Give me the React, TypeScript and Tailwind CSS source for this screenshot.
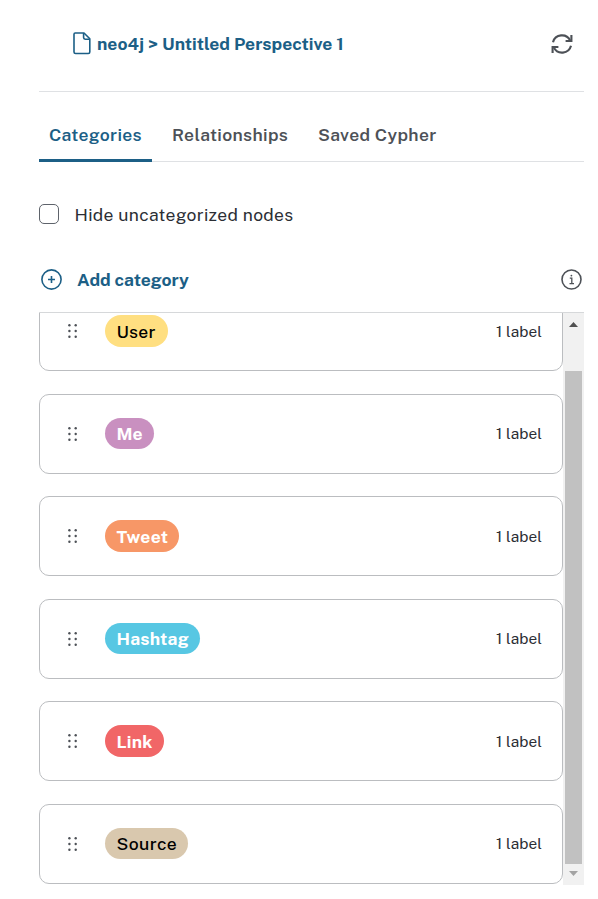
const categories = [
  { name: 'User', pill: 'w-[63px] bg-[#ffdf81] text-black font-medium tracking-[0.25px]' },
  { name: 'Me', pill: 'w-[49px] bg-[#c990c0] text-white font-bold tracking-[0.1px]' },
  { name: 'Tweet', pill: 'w-[74px] bg-[#f79767] text-white font-bold tracking-[0.25px]' },
  { name: 'Hashtag', pill: 'w-[95px] bg-[#57c7e3] text-white font-bold tracking-[0.25px]' },
  { name: 'Link', pill: 'w-[59px] bg-[#f16667] text-white font-bold tracking-[0.15px]' },
  { name: 'Source', pill: 'w-[83px] bg-[#d9c8ae] text-black font-medium tracking-[0.4px]' },
];

function FileIcon() {
  return (
    <svg width="18" height="23" viewBox="0 0 18 23" fill="none" stroke="#1c5f86" strokeWidth="1.6" strokeLinejoin="round">
      <path d="M2.2 1H11L16.8 6.8V20Q16.8 21.5 15.3 21.5H2.6Q1 21.5 1 20V2.3Q1 1 2.2 1Z" />
      <path d="M10.6 1V5.6Q10.6 7.2 12.2 7.2H16.8" />
    </svg>
  );
}

function RefreshIcon() {
  return (
    <svg width="22" height="22" viewBox="0 0 22 22" fill="none" stroke="#4d5157" strokeWidth="2.1">
      <path d="M2 9.2A9.2 9.2 0 0 1 19.2 7.6" />
      <path d="M20.4 2V8H14.6" />
      <path d="M20 12.8A9.2 9.2 0 0 1 2.8 14.4" />
      <path d="M1.6 20V14H7.4" />
    </svg>
  );
}

function DragHandle() {
  return (
    <svg className="mt-[0.4px]" width="10" height="14" viewBox="0 0 10 14" fill="#4d5157">
      {[1.3, 7, 12.7].map((y) => (
        <g key={y}>
          <circle cx="1.4" cy={y} r="1.2" />
          <circle cx="7.7" cy={y} r="1.2" />
        </g>
      ))}
    </svg>
  );
}

export default function App() {
  return (
    <div className="h-[899px] w-[598px] overflow-hidden bg-white pl-[39px] pr-[14px] font-['Public_Sans','Inter',sans-serif] text-[17.5px] leading-6 whitespace-nowrap">
      <header className="flex h-[92px] items-start justify-between border-b border-[#dfe1e4] pr-[11.5px] pl-[33.6px]">
        <div className="flex pt-8 text-[#1c5f86]">
          <FileIcon />
          <span className="ml-[6.4px] font-bold">neo4j &gt; Untitled Perspective 1</span>
        </div>
        <button className="pt-[33px]"><RefreshIcon /></button>
      </header>

      <nav className="flex h-[70px] border-b border-[#dfe1e4] pt-[31px] font-semibold tracking-[0.33px] text-[#4d5157]">
        <button className="-mb-px flex w-[113px] items-start justify-center rounded-t-[2px] border-b-3 border-[#1c5f86] text-[#1c5f86]">Categories</button>
        <button className="ml-5 flex">Relationships</button>
        <button className="ml-[30px] flex">Saved Cypher</button>
      </nav>

      <label className="mt-[41px] flex h-6 items-center text-[#2b2e34]">
        <span className="-mt-[2px] h-5 w-5 rounded-[5px] border border-[#5e636b]" />
        <span className="ml-[15.5px] tracking-[0.31px]">Hide uncategorized nodes</span>
      </label>

      <div className="mt-[41px] flex h-6 items-center justify-between pl-[2px] pr-[2px]">
        <button className="flex items-center font-bold text-[#1c5f86]">
          <svg className="-mt-px" width="21" height="21" viewBox="0 0 21 21" fill="none" stroke="#1c5f86" strokeWidth="1.6">
            <circle cx="10.5" cy="10.5" r="9.6" />
            <path d="M7 10.5H14M10.5 7V14" />
          </svg>
          <span className="ml-[15px]">Add category</span>
        </button>
        <svg className="-mt-[2px]" width="21" height="21" viewBox="0 0 21 21" fill="none" stroke="#4d5157" strokeWidth="1.6">
          <circle cx="10.5" cy="10.5" r="9.5" />
          <path d="M8.8 9.2H10.8V14.4M8.5 14.6H13" strokeWidth="1.3" />
          <circle cx="10.4" cy="6.6" r="0.9" fill="#4d5157" stroke="none" />
        </svg>
      </div>

      <section className="mt-5 flex h-[573px] overflow-hidden border-t border-[#d6d8da]">
        <div className="-mt-[21.9px] flex w-[524px] shrink-0 flex-col gap-[22.5px]">
          {categories.map((c) => (
            <div key={c.name} className="flex h-20 shrink-0 items-center rounded-[10px] border border-[#bbbdc0] pr-5 pl-7">
              <DragHandle />
              <span className={`ml-[27px] flex h-[31.5px] items-center rounded-full pt-[0.8px] pl-[11.5px] ${c.pill}`}>{c.name}</span>
              <span className="-mt-[1.2px] ml-auto text-[15.4px] tracking-[0.05px] text-[#2b2e34]">1 label</span>
            </div>
          ))}
        </div>
        <div className="flex w-[21px] shrink-0 flex-col items-center bg-[#f1f1f1]">
          <div className="flex h-[58px] pt-[9px]"><svg width="9" height="5"><path d="M0 5L4.5 0L9 5Z" fill="#505050" /></svg></div>
          <div className="h-[493px] w-[17px] bg-[#c1c1c1]" />
          <div className="pt-[7px]"><svg width="9" height="5"><path d="M0 0H9L4.5 5Z" fill="#a3a3a3" /></svg></div>
        </div>
      </section>
    </div>
  );
}
